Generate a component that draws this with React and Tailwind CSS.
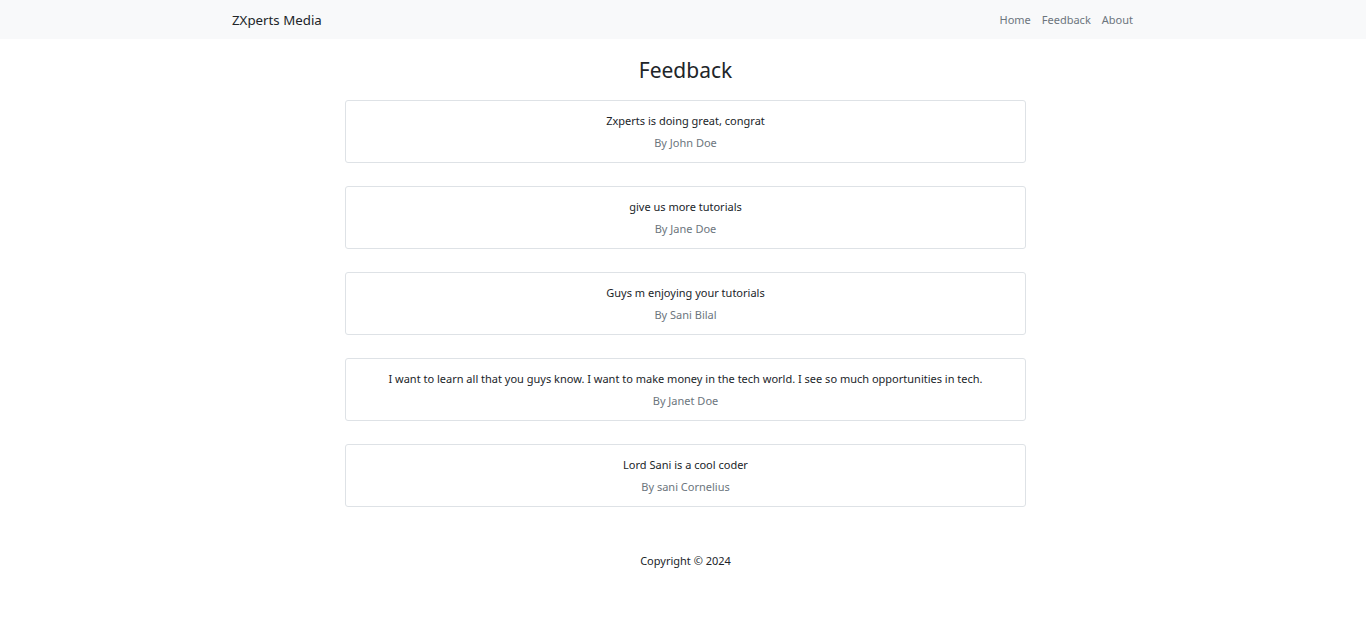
export default function App() {
  const items = [
    ["Zxperts is doing great, congrat", "John Doe"],
    ["give us more tutorials", "Jane Doe"],
    ["Guys m enjoying your tutorials", "Sani Bilal"],
    ["I want to learn all that you guys know. I want to make money in the tech world. I see so much opportunities in tech.", "Janet Doe"],
    ["Lord Sani is a cool coder", "sani Cornelius"],
  ];
  return (
    <div className="min-h-[634px] bg-white text-[#212529]" style={{ fontFamily: '"Noto Sans", sans-serif' }}>
      <nav className="h-[39px] bg-[#f8f9fa] flex items-center">
        <div className="w-[902px] mx-auto flex items-center justify-between pt-[1px]">
          <span className="text-[13.3px] text-[#212529] pt-[2px]">ZXperts Media</span>
          <div className="flex gap-[11px] text-[11px] text-[#6c757d] pr-[1px]">
            <span>Home</span>
            <span>Feedback</span>
            <span>About</span>
          </div>
        </div>
      </nav>
      <div className="pl-[5px]">
        <h1 className="text-center text-[21px] leading-none mt-[21px] mb-[19px]">Feedback</h1>
        <div className="w-[681px] mx-auto flex flex-col gap-[23px]">
          {items.map(([t, a]) => (
            <div key={a} className="h-[63px] border border-[#dee2e6] rounded-[3px] flex flex-col items-center text-center text-[11px] leading-[15px] pt-[12px]">
              <div>{t}</div>
              <div className="text-[#6c757d] mt-[7px]">By {a}</div>
            </div>
          ))}
        </div>
        <footer className="text-center text-[11px] mt-[46px]">Copyright © 2024</footer>
      </div>
    </div>
  );
}
